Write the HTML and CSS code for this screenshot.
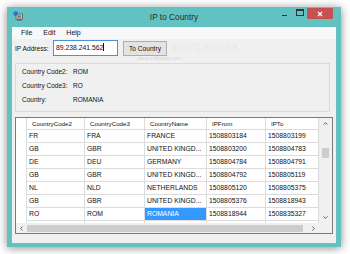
FILE: index.html
```html
<!DOCTYPE html>
<html lang="en">
<head>
  <meta charset="UTF-8">
  <title>IP to Country</title>
  <link rel="stylesheet" href="styles.css">
</head>
<body>

  <div class="window">
    <div class="titlebar">
      <div class="title-left">
        <svg class="app-icon" width="10" height="10" viewBox="0 0 10 10">
          <rect x="3" y="3" width="6.5" height="5" fill="#d8d8d8" stroke="#555" stroke-width="0.8"/>
          <rect x="4.2" y="4.2" width="4" height="2.6" fill="#6f7f8f"/>
          <rect x="4" y="8.4" width="4.5" height="1.2" fill="#555"/>
          <circle cx="2.6" cy="2.6" r="2.3" fill="#1f6fd6"/>
          <path d="M1.4 1.6 Q2.4 1.2 2.8 2.4 Q2 3.2 1.2 3" fill="#3fae3f"/>
        </svg>
      </div>
      <div class="title">IP to Country</div>
      <div class="caption">
        <span class="cap-btn min"><i></i></span>
        <span class="cap-btn max"><i></i></span>
        <span class="cap-btn close">
          <svg width="6" height="6" viewBox="0 0 6 6">
            <path d="M1 1 L5 5 M5 1 L1 5" stroke="#fff" stroke-width="1.3"/>
          </svg>
        </span>
      </div>
    </div>

    <div class="client">
      <div class="menubar">
        <span>File</span>
        <span>Edit</span>
        <span>Help</span>
      </div>

      <div class="toolbar">
        <label class="ip-label">IP Address:</label>
        <div class="ip-input">89.238.241.562<span class="caret"></span></div>
        <button type="button" class="go-btn">To Country</button>
      </div>

      <div class="group">
        <div class="info-row"><span class="key">Country Code2:</span><span>ROM</span></div>
        <div class="info-row"><span class="key">Country Code3:</span><span>RO</span></div>
        <div class="info-row"><span class="key">Country:</span><span>ROMANIA</span></div>
      </div>

      <div class="grid">
        <div class="viewport">
          <div class="row head">
            <span class="cell rh"></span>
            <span class="cell">CountryCode2</span>
            <span class="cell">CountryCode3</span>
            <span class="cell">CountryName</span>
            <span class="cell">IPFrom</span>
            <span class="cell">IPTo</span>
          </div>
          <div class="row">
            <span class="cell rh"></span>
            <span class="cell">FR</span>
            <span class="cell">FRA</span>
            <span class="cell">FRANCE</span>
            <span class="cell">1508803184</span>
            <span class="cell">1508803199</span>
          </div>
          <div class="row">
            <span class="cell rh"></span>
            <span class="cell">GB</span>
            <span class="cell">GBR</span>
            <span class="cell">UNITED KINGD...</span>
            <span class="cell">1508803200</span>
            <span class="cell">1508804783</span>
          </div>
          <div class="row">
            <span class="cell rh"></span>
            <span class="cell">DE</span>
            <span class="cell">DEU</span>
            <span class="cell">GERMANY</span>
            <span class="cell">1508804784</span>
            <span class="cell">1508804791</span>
          </div>
          <div class="row">
            <span class="cell rh"></span>
            <span class="cell">GB</span>
            <span class="cell">GBR</span>
            <span class="cell">UNITED KINGD...</span>
            <span class="cell">1508804792</span>
            <span class="cell">1508805119</span>
          </div>
          <div class="row">
            <span class="cell rh"></span>
            <span class="cell">NL</span>
            <span class="cell">NLD</span>
            <span class="cell">NETHERLANDS</span>
            <span class="cell">1508805120</span>
            <span class="cell">1508805375</span>
          </div>
          <div class="row">
            <span class="cell rh"></span>
            <span class="cell">GB</span>
            <span class="cell">GBR</span>
            <span class="cell">UNITED KINGD...</span>
            <span class="cell">1508805376</span>
            <span class="cell">1508818943</span>
          </div>
          <div class="row">
            <span class="cell rh"></span>
            <span class="cell">RO</span>
            <span class="cell">ROM</span>
            <span class="cell selected">ROMANIA</span>
            <span class="cell">1508818944</span>
            <span class="cell">1508835327</span>
          </div>
          <div class="row">
            <span class="cell rh"></span>
            <span class="cell"></span>
            <span class="cell"></span>
            <span class="cell"></span>
            <span class="cell"></span>
            <span class="cell"></span>
          </div>
        </div>

        <div class="vscroll">
          <span class="arrow">
            <svg width="5" height="3" viewBox="0 0 5 3"><path d="M0.5 2.6 L2.5 0.6 L4.5 2.6" fill="none" stroke="#606060"/></svg>
          </span>
          <div class="vtrack"><div class="vthumb"></div></div>
          <span class="arrow">
            <svg width="5" height="3" viewBox="0 0 5 3"><path d="M0.5 0.4 L2.5 2.4 L4.5 0.4" fill="none" stroke="#606060"/></svg>
          </span>
        </div>

        <div class="hscroll">
          <span class="arrow">
            <svg width="3" height="5" viewBox="0 0 3 5"><path d="M2.6 0.5 L0.6 2.5 L2.6 4.5" fill="none" stroke="#606060"/></svg>
          </span>
          <div class="htrack"><div class="hthumb"></div></div>
          <span class="arrow">
            <svg width="3" height="5" viewBox="0 0 3 5"><path d="M0.4 0.5 L2.4 2.5 L0.4 4.5" fill="none" stroke="#606060"/></svg>
          </span>
        </div>

        <div class="corner"></div>
      </div>

      <!-- site watermark over the form -->
      <div class="wm-logo">SOFTPEDIA</div>
      <div class="wm-url">www.softpedia.com</div>
    </div>
  </div>

</body>
</html>
```

FILE: styles.css
```css
body {
  margin: 0;
  padding: 0;
  width: 350px;
  height: 254px;
  background-color: #ffffff;
  font-family: "Liberation Sans", Arial, sans-serif;
  overflow: hidden;
}

.window {
  margin: 7px 0 0 7px;
  width: 334px;
  height: 240px;
  background-color: #62c2c1;
  box-shadow: 0 1px 9px rgba(0, 0, 0, 0.45);
  display: flex;
  flex-direction: column;
}

/* title bar */
.titlebar {
  height: 20px;
  display: grid;
  grid-template-columns: 1fr auto 1fr;
  align-items: start;
}

.title-left {
  padding: 4px 0 0 6px;
}

.app-icon {
  display: block;
}

.title {
  font-size: 8.3px;
  line-height: 20px;
  color: #2a2a2a;
}

.caption {
  display: flex;
  justify-content: flex-end;
  padding-right: 8px;
}

.cap-btn {
  width: 15px;
  height: 11px;
  margin-top: 1px;
  display: flex;
  align-items: center;
  justify-content: center;
}

.cap-btn.min i {
  display: block;
  width: 5px;
  height: 1px;
  margin-top: 3px;
  background-color: #333;
}

.cap-btn.max i {
  display: block;
  width: 6px;
  height: 4px;
  border: 1px solid #333;
  border-top-width: 2px;
  margin-top: -2px;
}

.cap-btn.close {
  width: 26px;
  background-color: #c75050;
}

.cap-btn.close svg {
  display: block;
}

/* client area */
.client {
  position: relative;
  flex: 1;
  margin: 0 5px 4px 5px;
  background-color: #f0f0f0;
  display: flex;
  flex-direction: column;
}

.menubar {
  height: 12px;
  background-color: #f8f8f8;
  display: flex;
  gap: 11px;
  padding-left: 9px;
  font-size: 7px;
  line-height: 12px;
  color: #111;
}

.toolbar {
  margin-top: 1px;
  height: 16px;
  display: flex;
  align-items: center;
  padding-left: 3px;
}

.ip-label {
  width: 38px;
  font-size: 6.6px;
  color: #111;
}

.ip-input {
  width: 65px;
  height: 16px;
  box-sizing: border-box;
  border: 1px solid #4f8fd0;
  background-color: #fff;
  font-size: 6.8px;
  line-height: 14px;
  padding-left: 2px;
  color: #111;
}

.caret {
  display: inline-block;
  width: 1px;
  height: 8px;
  background-color: #111;
  vertical-align: -1px;
}

.go-btn {
  margin-left: 5px;
  width: 44px;
  height: 15px;
  padding: 0;
  border: 1px solid #adadad;
  background-color: #e3e3e3;
  font-family: "Liberation Sans", Arial, sans-serif;
  font-size: 6.6px;
  color: #111;
}

.group {
  margin: 7px 0 0 3px;
  width: 315px;
  height: 49px;
  box-sizing: border-box;
  border: 1px solid #dadada;
  padding: 1px 0 0 6px;
}

.info-row {
  display: flex;
  height: 14px;
  line-height: 14px;
  font-size: 6.5px;
  color: #111;
}

.key {
  width: 51px;
}

/* data grid */
.grid {
  margin: 5px 0 0 3px;
  width: 318px;
  height: 117px;
  box-sizing: border-box;
  border: 1px solid #7a7a7a;
  background-color: #fff;
  display: grid;
  grid-template-columns: 1fr 13px;
  grid-template-rows: 1fr 10px;
}

.viewport {
  overflow: hidden;
}

.row {
  display: grid;
  grid-template-columns: 11px 58px 60px 62px 59px 53px;
  height: 13px;
  box-sizing: border-box;
  border-bottom: 1px solid #dcdcdc;
  font-size: 6.8px;
  line-height: 12px;
  color: #111;
}

.row.head {
  height: 12px;
  line-height: 11px;
  font-size: 6.2px;
}

.cell {
  box-sizing: border-box;
  border-right: 1px solid #dcdcdc;
  padding-left: 2px;
  white-space: nowrap;
  overflow: hidden;
}

.row.head .cell {
  padding-left: 5px;
}

.cell.rh {
  padding: 0;
  margin-bottom: -1px;
  background-color: #fff;
}

.cell.selected {
  background-color: #3399ff;
  color: #fff;
}

.vscroll {
  background-color: #f0f0f0;
  display: flex;
  flex-direction: column;
  align-items: center;
}

.vscroll .arrow {
  height: 11px;
  display: flex;
  align-items: center;
}

.vtrack {
  flex: 1;
}

.vthumb {
  margin-top: 19px;
  width: 7px;
  height: 10px;
  background-color: #cdcdcd;
}

.hscroll {
  background-color: #f0f0f0;
  display: flex;
  align-items: center;
}

.hscroll .arrow {
  width: 11px;
  display: flex;
  justify-content: center;
}

.htrack {
  flex: 1;
}

.hthumb {
  width: 276px;
  height: 7px;
  background-color: #cdcdcd;
}

.corner {
  background-color: #f0f0f0;
}

.wm-logo {
  position: absolute;
  left: 160px;
  top: 14px;
  font-family: "Liberation Serif", serif;
  font-size: 11px;
  letter-spacing: 1px;
  color: #f2f2f2;
  text-shadow: 0 0 1px #cfcfcf;
}

.wm-url {
  position: absolute;
  left: 126px;
  top: 28px;
  font-size: 5px;
  font-style: italic;
  color: #d6d6d6;
}
```
